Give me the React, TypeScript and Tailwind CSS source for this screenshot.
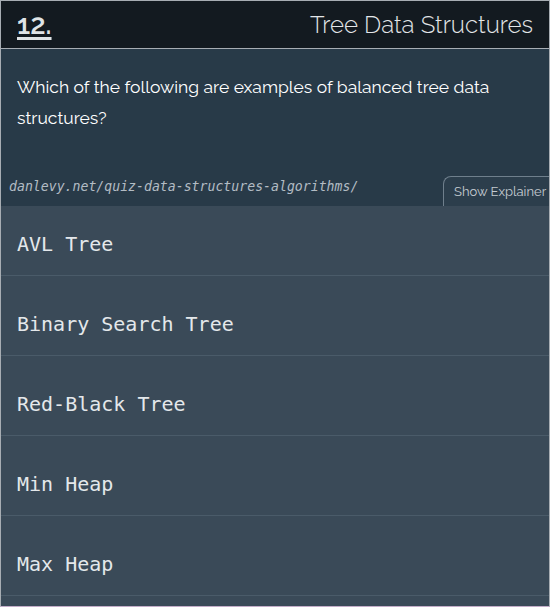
import React from "react";

const options = ["AVL Tree", "Binary Search Tree", "Red-Black Tree", "Min Heap", "Max Heap"];

const sans = "font-['Raleway','Lato','Open_Sans',sans-serif]";
const mono = "font-['DejaVu_Sans_Mono',monospace]";

export default function App() {
  return (
    <div className="w-[550px] h-[607px] overflow-hidden bg-[#3a4a58] flex flex-col border-x border-t border-[#a7adb3] border-b-[1px] border-b-[#c3adc9]">
      <div className={`h-[48px] shrink-0 bg-[#131a20] flex items-center justify-between pl-4 pr-4 border-b border-[#a7adb3] ${sans}`}>
        <span className="text-[28px] font-semibold text-[#dfe3e6] underline underline-offset-[3px] decoration-[3px]">12.</span>
        <span className="text-[24px] font-light text-[#e3e6e8]">Tree Data Structures</span>
      </div>

      <div className="h-[157px] shrink-0 bg-[#283a48] flex flex-col">
        <p className={`px-4 pt-[23px] text-[17.5px] leading-[31px] text-white ${sans}`}>
          Which of the following are examples of balanced tree data structures?
        </p>
        <div className="mt-auto flex items-end justify-between">
          <span className={`pl-2 pb-[9px] text-[13.2px] italic text-[#b3bcc4] ${mono}`}>
            danlevy.net/quiz-data-structures-algorithms/
          </span>
          <div className={`h-[30px] w-[106px] border-l border-t border-[#6f7f8c] rounded-tl-[8px] bg-[#2c3e4c] flex items-center pl-[10px] text-[13px] text-[#c4cbd1] ${sans}`}>
            Show Explainer
          </div>
        </div>
      </div>

      {options.map((o, i) => (
        <div
          key={o}
          className={`shrink-0 flex items-center px-4 border-b border-[#4a5b69] ${i === 0 ? "h-[70px] pt-[6px]" : "h-[80px] pt-[16px]"}`}
        >
          <span className={`text-[20px] text-[#e4e8eb] ${mono}`}>{o}</span>
        </div>
      ))}
      <div className="flex-1" />
    </div>
  );
}
